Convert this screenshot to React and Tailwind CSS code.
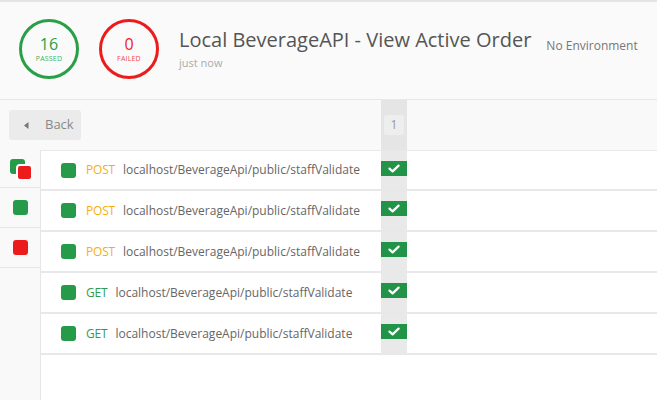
import React from 'react';

const requests = [
  { method: 'POST', url: 'localhost/BeverageApi/public/staffValidate' },
  { method: 'POST', url: 'localhost/BeverageApi/public/staffValidate' },
  { method: 'POST', url: 'localhost/BeverageApi/public/staffValidate' },
  { method: 'GET', url: 'localhost/BeverageApi/public/staffValidate' },
  { method: 'GET', url: 'localhost/BeverageApi/public/staffValidate' },
];

const StatCircle = ({ value, label, tone }) => {
  const styles = {
    pass: { ring: 'border-[#2a9f47]', num: 'text-[#2a9f47]', label: 'text-[#3cb35a]' },
    fail: { ring: 'border-[#ec1c1c]', num: 'text-[#ec1c1c]', label: 'text-[#f04a4a]' },
  }[tone];

  return (
    <div className={`w-[60px] h-[60px] rounded-full border-[3px] ${styles.ring} flex flex-col items-center justify-center`}>
      <span className={`text-[16px] leading-[20px] ${styles.num}`}>{value}</span>
      <span className={`text-[7px] leading-[10px] uppercase tracking-[0.2px] ${styles.label}`}>{label}</span>
    </div>
  );
};

const CheckBadge = () => (
  <div className="w-[26px] h-[15px] bg-[#229447] flex items-center justify-center">
    <svg width="12" height="9" viewBox="0 0 12 9" fill="none">
      <path d="M1.5 4.6 L4.6 7.4 L10.6 1.6" stroke="#fff" strokeWidth="2.2" strokeLinecap="round" strokeLinejoin="round" />
    </svg>
  </div>
);

const RequestRow = ({ method, url, first }) => (
  <div className={`flex ${first ? 'h-[40px]' : 'h-[41px]'} border-b-2 border-[#e8e8e8]`}>
    <div className="w-[340px] flex items-center pl-[20px]">
      <span className="w-[15px] h-[15px] rounded-[3px] bg-[#259b4a]" />
      <span className={`ml-[10px] text-[12px] tracking-[-0.2px] ${method === 'POST' ? 'text-[#f7ae0c]' : 'text-[#2f9e4c]'}`}>{method}</span>
      <span className="ml-[8px] text-[12px] text-[#666]">{url}</span>
    </div>
    <div className="w-[26px] bg-[#e9e9e9] pt-[10px]">
      <CheckBadge />
    </div>
    <div className="flex-1" />
  </div>
);

export default function App() {
  return (
    <div className="w-full h-[400px] overflow-hidden bg-white flex flex-col" style={{ fontFamily: '"Open Sans", "Liberation Sans", sans-serif' }}>
      <div className="h-[2px] bg-[#e4e4e4]" />

      {/* header */}
      <div className="h-[98px] bg-[#fafafa] border-b border-[#e8e8e8] flex items-start px-[19px]">
        <div className="mt-[17px] flex gap-[20px]">
          <StatCircle value="16" label="Passed" tone="pass" />
          <StatCircle value="0" label="Failed" tone="fail" />
        </div>
        <div className="ml-[20px] mt-[24px] flex flex-col">
          <div className="flex items-start">
            <span className="text-[20px] leading-[27px] text-[#555]">Local BeverageAPI - View Active Order</span>
            <span className="ml-[15px] mt-[12px] text-[12px] leading-[16px] text-[#777]">No Environment</span>
          </div>
          <span className="mt-[1px] text-[11px] leading-[15px] text-[#aaa]">just now</span>
        </div>
      </div>

      {/* toolbar */}
      <div className="h-[50px] bg-[#f9f9f9] flex">
        <div className="w-[381px] pl-[9px] pt-[10px]">
          <button className="w-[72px] h-[30px] rounded-[3px] bg-[#ebebeb] flex items-center pl-[15px]">
            <svg width="5" height="7" viewBox="0 0 5 7">
              <path d="M4.5 0 L0 3.5 L4.5 7 Z" fill="#777" />
            </svg>
            <span className="ml-[16px] text-[13px] text-[#888]">Back</span>
          </button>
        </div>
        <div className="w-[26px] bg-[#e5e5e5] pt-[15px] flex justify-center">
          <div className="w-[20px] h-[20px] rounded-[3px] bg-[#eeeeee] flex items-center justify-center text-[12px] text-[#999]">1</div>
        </div>
      </div>

      {/* body */}
      <div className="flex-1 flex">
        <div className="w-[41px] bg-[#f9f9f9] border-r border-[#e6e6e6]">
          <div className="h-[38px] border-b border-[#e6e6e6] pt-[9px] pl-[10px]">
            <div className="relative w-[23px] h-[22px]">
              <span className="absolute left-0 top-0 w-[15px] h-[15px] rounded-[3px] bg-[#259b4a]" />
              <span className="absolute left-[6px] top-[5px] w-[17px] h-[17px] rounded-[4px] border-2 border-white bg-[#ec1c1c]" />
            </div>
          </div>
          <div className="h-[40px] border-b border-[#e6e6e6] flex items-center pl-[13px]">
            <span className="w-[15px] h-[15px] rounded-[3px] bg-[#259b4a]" />
          </div>
          <div className="h-[40px] border-b border-[#e6e6e6] flex items-center pl-[13px]">
            <span className="w-[15px] h-[15px] rounded-[3px] bg-[#ec1c1c]" />
          </div>
        </div>
        <div className="flex-1 border-t border-[#e8e8e8]">
          {requests.map((r, i) => (
            <RequestRow key={i} method={r.method} url={r.url} first={i === 0} />
          ))}
        </div>
      </div>
    </div>
  );
}
